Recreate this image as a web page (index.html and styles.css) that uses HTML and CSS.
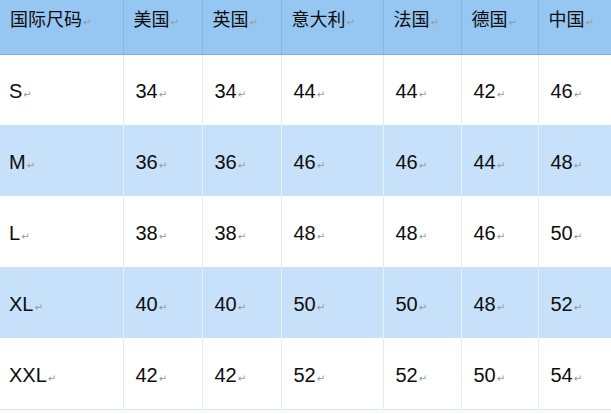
FILE: index.html
```html
<!DOCTYPE html>
<html lang="zh">
<head>
<meta charset="utf-8">
<link rel="stylesheet" href="styles.css">
</head>
<body>
<table class="size-table">
  <colgroup>
    <col class="c1"><col class="c2"><col class="c3"><col class="c4"><col class="c5"><col class="c6"><col class="c7">
  </colgroup>
  <thead>
    <tr>
      <th>国际尺码<span class="rm">↵</span></th>
      <th>美国<span class="rm">↵</span></th>
      <th>英国<span class="rm">↵</span></th>
      <th>意大利<span class="rm">↵</span></th>
      <th>法国<span class="rm">↵</span></th>
      <th>德国<span class="rm">↵</span></th>
      <th>中国<span class="rm">↵</span></th>
    </tr>
  </thead>
  <tbody>
    <tr><td>S<span class="rm">↵</span></td><td>34<span class="rm">↵</span></td><td>34<span class="rm">↵</span></td><td>44<span class="rm">↵</span></td><td>44<span class="rm">↵</span></td><td>42<span class="rm">↵</span></td><td>46<span class="rm">↵</span></td></tr>
    <tr class="alt"><td>M<span class="rm">↵</span></td><td>36<span class="rm">↵</span></td><td>36<span class="rm">↵</span></td><td>46<span class="rm">↵</span></td><td>46<span class="rm">↵</span></td><td>44<span class="rm">↵</span></td><td>48<span class="rm">↵</span></td></tr>
    <tr><td>L<span class="rm">↵</span></td><td>38<span class="rm">↵</span></td><td>38<span class="rm">↵</span></td><td>48<span class="rm">↵</span></td><td>48<span class="rm">↵</span></td><td>46<span class="rm">↵</span></td><td>50<span class="rm">↵</span></td></tr>
    <tr class="alt"><td>XL<span class="rm">↵</span></td><td>40<span class="rm">↵</span></td><td>40<span class="rm">↵</span></td><td>50<span class="rm">↵</span></td><td>50<span class="rm">↵</span></td><td>48<span class="rm">↵</span></td><td>52<span class="rm">↵</span></td></tr>
    <tr><td>XXL<span class="rm">↵</span></td><td>42<span class="rm">↵</span></td><td>42<span class="rm">↵</span></td><td>52<span class="rm">↵</span></td><td>52<span class="rm">↵</span></td><td>50<span class="rm">↵</span></td><td>54<span class="rm">↵</span></td></tr>
  </tbody>
</table>
</body>
</html>
```
FILE: styles.css
```css
html, body {
  margin: 0;
  padding: 0;
  background: #fafbfc;
}
.size-table {
  border-collapse: collapse;
  table-layout: fixed;
  width: 611px;
  font-family: "Liberation Sans", "Noto Sans CJK SC", Arial, sans-serif;
  font-size: 20px;
  color: #0d0d0d;
  border-bottom: 1px solid #e2e4e7;
}
.c1 { width: 123px; }
.c2 { width: 79px; }
.c3 { width: 79px; }
.c4 { width: 102px; }
.c5 { width: 78px; }
.c6 { width: 77px; }
.c7 { width: 73px; }
.size-table th {
  height: 54px;
  box-sizing: border-box;
  background: #96c7f2;
  font-weight: normal;
  text-align: left;
  vertical-align: top;
  padding: 5px 0 0 10px;
  border-left: 1px solid #86b6e0;
  border-bottom: 1px solid #7aaedc;
  font-family: "Noto Sans CJK SC", "Liberation Sans", sans-serif;
  font-size: 18px;
  line-height: 26px;
}
.size-table th:first-child { border-left: none; }
.size-table td {
  height: 71px;
  box-sizing: border-box;
  background: #ffffff;
  text-align: left;
  vertical-align: middle;
  padding: 4px 0 0 12px;
  border-left: 1px solid #e3eaf1;
}
.size-table td:first-child { border-left: none; padding-left: 9px; }
.size-table tr.alt td {
  background: #c6e1f9;
  border-left-color: #e8f1fa;
}
.rm {
  font-family: "DejaVu Sans", sans-serif;
  font-size: 10px;
  color: #999999;
  margin-left: 1px;
}
```
